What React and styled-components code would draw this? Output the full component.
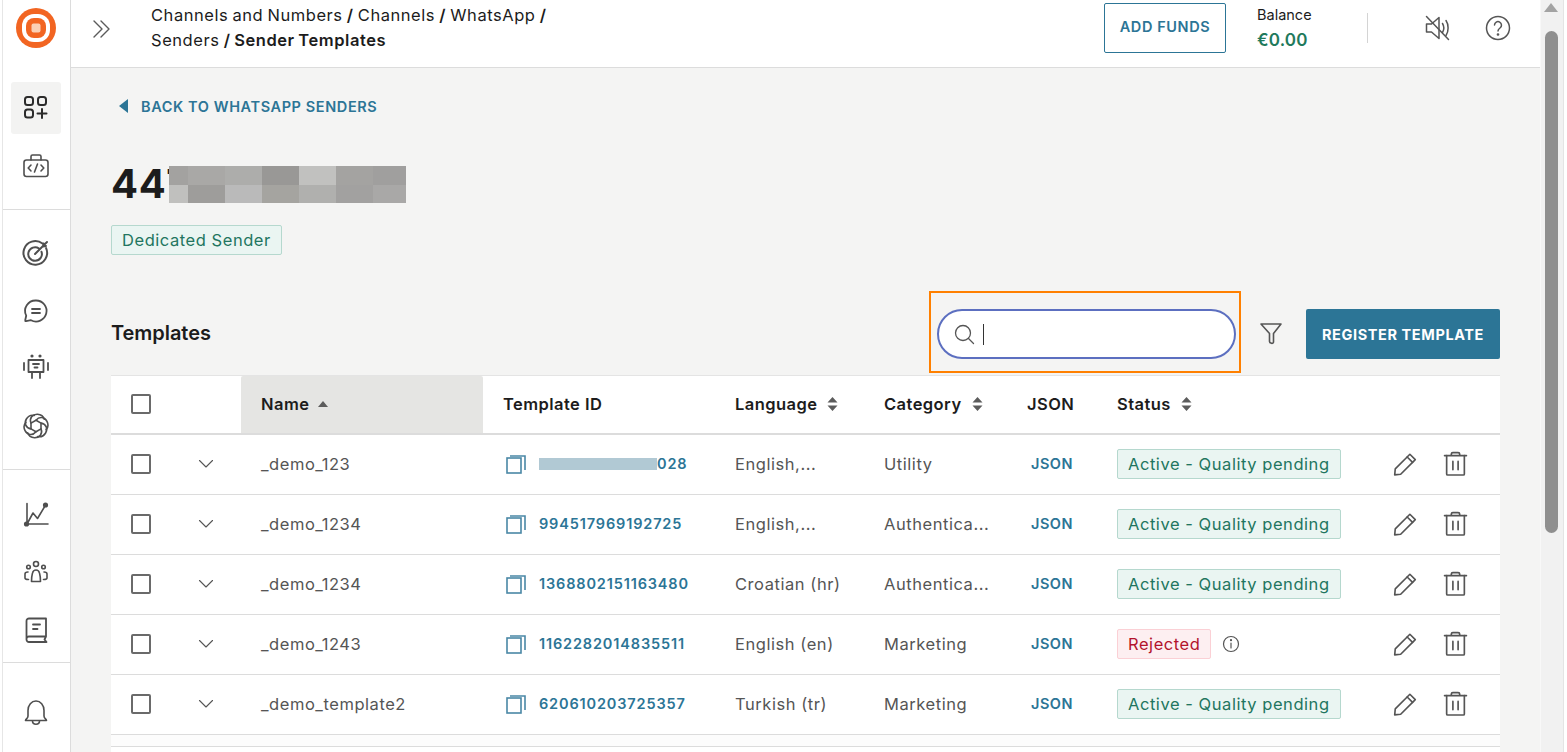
import React from "react";
import styled, { createGlobalStyle } from "styled-components";

const Global = createGlobalStyle`
  html, body { margin: 0; padding: 0; height: 100%; overflow: hidden; background: #fff; }
  body { font-family: Inter, "Liberation Sans", sans-serif; color: #1c1c1c; }
  #root { height: 100%; }
  * { box-sizing: border-box; }
`;

const Shell = styled.div`
  display: flex;
  width: 1567px;
  height: 752px;
  overflow: hidden;
  background: #fff;
`;

const Sidebar = styled.aside`
  width: 69px;
  flex: none;
  margin-left: 2px;
  border-left: 1px solid #e6e6e6;
  border-right: 1px solid #dcdcdc;
  display: flex;
  flex-direction: column;
  background: #fff;
`;

const SideGroup = styled.div`
  height: ${(p) => p.$h}px;
  flex: none;
  padding-top: ${(p) => p.$pt || 0}px;
  border-bottom: ${(p) => (p.$last ? "none" : "1px solid #dcdcdc")};
  display: flex;
  flex-direction: column;
  align-items: center;
  gap: ${(p) => p.$gap || 0}px;
`;

const LogoWrap = styled.div`
  height: 82px;
  width: 100%;
  flex: none;
  display: flex;
  align-items: flex-start;
  padding-top: 8px;
  justify-content: center;
  padding-right: 2px;
`;

const NavItem = styled.div`
  width: 50px;
  height: ${(p) => p.$h || 52}px;
  flex: none;
  margin-right: 2px;
  display: flex;
  align-items: center;
  justify-content: center;
  border-radius: 3px;
  background: ${(p) => (p.$active ? "#f3f3f2" : "transparent")};
  color: #4f4f4f;
`;

const Main = styled.div`
  flex: 1;
  min-width: 0;
  display: flex;
  flex-direction: column;
  background: #f4f4f3;
`;

const Header = styled.header`
  height: 68px;
  flex: none;
  background: #fff;
  border-bottom: 1px solid #dcdcdc;
  display: flex;
  align-items: flex-start;
  padding-left: 21px;
`;

const Expand = styled.div`
  width: 20px;
  height: 20px;
  margin-top: 19px;
  margin-right: 39px;
  color: #5b5b5b;
`;

const Crumbs = styled.div`
  width: 420px;
  margin-top: 3px;
  font-size: 16.5px;
  line-height: 25px;
  letter-spacing: 0.55px;
  word-spacing: -1px;
  color: #1c1c1c;
  b { font-weight: 600; }
`;

const HeaderRight = styled.div`
  margin-left: auto;
  display: flex;
  align-items: flex-start;
`;

const AddFunds = styled.button`
  width: 122px;
  height: 50px;
  margin-top: 3px;
  padding-bottom: 5px;
  background: #fff;
  border: 1px solid #2c7596;
  border-radius: 2px;
  color: #2c7596;
  font: 600 14.5px Inter, sans-serif;
  letter-spacing: 0.6px;
`;

const Balance = styled.div`
  margin-left: 31px;
  width: 110px;
  padding-top: 6px;
  font-size: 14.5px;
  line-height: 18px;
`;

const BalanceValue = styled.div`
  margin-top: 5px;
  font-size: 17px;
  line-height: 22px;
  font-weight: 600;
  color: #1f7a5c;
  letter-spacing: 0.2px;
`;

const HeaderDivider = styled.div`
  width: 1px;
  height: 30px;
  margin-top: 13px;
  background: #d4d4d4;
`;

const HeaderIcon = styled.div`
  width: 28px;
  height: 28px;
  margin-top: 14px;
  margin-left: ${(p) => p.$ml}px;
  margin-right: ${(p) => p.$mr || 0}px;
  color: #555;
`;

const Content = styled.main`
  flex: 1;
  min-height: 0;
  padding: 0 40px;
  display: flex;
  flex-direction: column;
`;

const Back = styled.div`
  display: flex;
  align-items: center;
  gap: 13px;
  margin-top: 29px;
  margin-left: 8px;
  height: 18px;
  font-size: 14.5px;
  font-weight: 600;
  letter-spacing: 0.6px;
  color: #2c7596;
`;

const Triangle = styled.span`
  width: 0;
  height: 0;
  border-top: 7px solid transparent;
  border-bottom: 7px solid transparent;
  border-right: 9px solid #2c7596;
`;

const Title = styled.h1`
  position: relative;
  margin: 46px 0 0;
  height: 48px;
  font-size: 40px;
  line-height: 46px;
  font-weight: 700;
  letter-spacing: 0.6px;
  color: #1c1c1c;
`;

const Mosaic = styled.div`
  position: absolute;
  left: 58px;
  top: 5px;
  width: 237px;
  height: 37px;
  display: grid;
  grid-template-columns: 19px repeat(5, 37px) 33px;
  grid-template-rows: 19px 18px;
`;

const Pixel = styled.i`
  display: block;
  background: ${(p) => p.$c};
`;

const TagRow = styled.div`
  margin-top: 16px;
  height: 30px;
  display: flex;
`;

const Tag = styled.span`
  display: inline-flex;
  align-items: center;
  height: 30px;
  padding: 0 10px;
  border-radius: 2px;
  font-size: 16.5px;
  letter-spacing: 0.55px;
  border: 1px solid ${(p) => (p.$red ? "#fbd0d5" : "#b5d8ce")};
  background: ${(p) => (p.$red ? "#fdeff1" : "#eaf5f2")};
  color: ${(p) => (p.$red ? "#b3132c" : "#227560")};
`;

const Toolbar = styled.div`
  margin-top: 36px;
  height: 82px;
  flex: none;
  display: flex;
  align-items: center;
`;

const SectionTitle = styled.h2`
  margin: 2px 0 0;
  font-size: 20px;
  font-weight: 600;
  color: #1c1c1c;
  letter-spacing: -0.05px;
`;

const Focus = styled.div`
  margin-left: auto;
  width: 312px;
  height: 82px;
  border: 2px solid #ff8000;
  padding: 16px 3px 0 6px;
`;

const SearchBox = styled.div`
  width: 299px;
  height: 50px;
  background: #fff;
  border: 2px solid #5c6fc0;
  border-radius: 25px;
  display: flex;
  align-items: center;
  padding-left: 14px;
  color: #555;
`;

const Caret = styled.span`
  width: 1px;
  height: 21px;
  margin-left: 8px;
  background: #333;
`;

const FilterBtn = styled.div`
  width: 24px;
  height: 24px;
  margin: 2px 23px 0 18px;
  color: #555;
`;

const Primary = styled.button`
  width: 194px;
  height: 50px;
  margin-top: 4px;
  border: none;
  border-radius: 2px;
  background: #2c7596;
  color: #fff;
  font: 700 14.5px Inter, sans-serif;
  letter-spacing: 0.6px;
`;

const Table = styled.div`
  margin-top: 2px;
  background: #fff;
  flex: 1;
`;

const COLS = "60px 70px 242px 232px 149px 143px 90px 263px 140px";

const HeadRow = styled.div`
  display: grid;
  grid-template-columns: ${COLS};
  height: 60px;
  border-top: 1px solid #e4e4e4;
  border-bottom: 2px solid #dcdcdc;
  font-size: 16.5px;
  font-weight: 600;
  letter-spacing: 0.45px;
  color: #1c1c1c;
`;

const Row = styled.div`
  display: grid;
  grid-template-columns: ${COLS};
  height: 60px;
  border-bottom: 1px solid #dcdcdc;
  font-size: 16.5px;
  letter-spacing: 0.55px;
  color: #555;
`;

const Cell = styled.div`
  display: flex;
  align-items: center;
  gap: ${(p) => p.$gap || 0}px;
  padding-left: ${(p) => p.$pl ?? 20}px;
  padding-bottom: 2px;
  min-width: 0;
  white-space: nowrap;
  background: ${(p) => (p.$sorted ? "#e5e5e3" : "transparent")};
  border-radius: ${(p) => (p.$sorted ? "2px 2px 0 0" : "0")};
`;

const Box = styled.span`
  width: 20px;
  height: 20px;
  border: 2px solid #6a6a6a;
  border-radius: 2px;
  background: #fff;
`;

const Mono = styled.span`
  color: #2c7596;
  font-size: 14.5px;
  font-weight: 600;
  letter-spacing: 0.85px;
  display: inline-flex;
  align-items: center;
`;

const JsonLink = styled.span`
  color: #2c7596;
  font-size: 14.5px;
  font-weight: 600;
  letter-spacing: 0.5px;
  margin-left: 4px;
`;

const Blur = styled.span`
  display: inline-block;
  width: 118px;
  height: 12px;
  background: #b1c9d4;
`;

const TableEnd = styled.div`
  height: 12px;
  background: #fcfcfc;
  border-bottom: 1px solid #dcdcdc;
`;

const ScrollTrack = styled.div`
  width: 24px;
  flex: none;
  background: #f1f1f1;
  border-right: 1px solid #e4e4e4;
  position: relative;
  margin-right: 3px;
  border-left: 1px solid #f8f8f8;
`;

const ScrollUp = styled.span`
  position: absolute;
  top: 3px;
  left: 3px;
  width: 0;
  height: 0;
  border-left: 7.5px solid transparent;
  border-right: 7.5px solid transparent;
  border-bottom: 9px solid #a3a3a3;
`;

const ScrollThumb = styled.span`
  position: absolute;
  top: 31px;
  left: 4px;
  width: 13px;
  height: 502px;
  border-radius: 7px;
  background: #8f8f8f;
`;

const S = ({ size = 28, vb = 28, sw = 1.6, children, fill = "none" }) => (
  <svg width={size} height={size} viewBox={`0 0 ${vb} ${vb}`} fill={fill} stroke="currentColor" strokeWidth={sw} strokeLinecap="round" strokeLinejoin="round" style={{ display: "block" }}>
    {children}
  </svg>
);

const Logo = () => (
  <svg width="40" height="40" viewBox="0 0 40 40" style={{ display: "block" }}>
    <circle cx="20" cy="20" r="20" fill="#f26522" />
    <rect x="6" y="6" width="28" height="28" rx="12" fill="#fff" />
    <rect x="10" y="10" width="20" height="20" rx="8" fill="#f26522" />
    <rect x="15.5" y="15.5" width="9" height="9" rx="2" fill="#fbd0b5" />
  </svg>
);

const IconApps = () => (
  <S>
    <g stroke="#2b2b2b" strokeWidth="2">
      <rect x="3" y="3" width="8" height="8" rx="2.5" />
      <rect x="16" y="3" width="8" height="8" rx="2.5" />
      <rect x="3" y="15.5" width="8" height="8" rx="2.5" />
      <path d="M20 15v9M15.5 19.5h9" />
    </g>
  </S>
);
const IconDev = () => (
  <S>
    <rect x="2" y="7" width="24" height="16.500" rx="2.500" />
    <path d="M9 7V3.500c0-1 .5-1.500 1.500-1.500h7c1 0 1.500.5 1.500 1.500V7" />
    <path d="M9 12l-2.800 3 2.800 3M19 12l2.800 3-2.800 3M15.500 11l-3 8" />
  </S>
);
const IconTarget = () => (
  <S>
    <path d="M20.500 4.500a11.800 11.800 0 1 0 3.600 4.600" strokeWidth="2" />
    <path d="M17 9.500a6.800 6.800 0 1 0 2.500 3.300" strokeWidth="2" />
    <path d="M13 15L25 3M21.500 4.500l-.5 3 3-.5" strokeWidth="2" />
  </S>
);
const IconChat = () => (
  <S>
    <path d="M14 3.500a10.500 10.500 0 1 1-5 19.700l-5 1c-.7.1-1-.4-.8-1l1-4.500A10.500 10.500 0 0 1 14 3.500z" strokeWidth="1.8" />
    <path d="M10 12h8M10 16h8" strokeWidth="1.8" />
  </S>
);
const IconBot = () => (
  <S>
    <rect x="6.500" y="6" width="15" height="12" strokeWidth="1.8" />
    <path d="M11 10h6M12.500 13.500h3M10 18v6M18 18v6M2 9v7M26 9v7" strokeWidth="1.8" />
    <circle cx="10" cy="2" r=".8" fill="currentColor" />
    <circle cx="18" cy="2" r=".8" fill="currentColor" />
  </S>
);
const IconSwirl = () => (
  <S sw={1.6}>
    <path d="M14 8.200L19 11.100V16.900L14 19.800L9 16.900V11.100z" />
    {[0, 60, 120, 180, 240, 300].map((a) => (
      <path key={a} transform={`rotate(${a} 14 14)`} d="M9 11.100C7 6 10.500 2 15.500 2.200C19 2.400 21.500 4.500 22.300 7.200" />
    ))}
  </S>
);
const IconChart = () => (
  <S>
    <path d="M5 3.500v20.500h21M5 24L11 13l4.500 5.500L23 6" strokeWidth="1.6" />
    <circle cx="4.500" cy="24" r="1.800" fill="currentColor" />
    <circle cx="23.500" cy="5" r="1.800" fill="currentColor" />
  </S>
);
const IconTeam = () => (
  <S>
    <circle cx="14" cy="6" r="2.500" />
    <path d="M9.500 23.500c0-3 .3-6 1-8.500.5-2 2-3 3.500-3s3 1 3.500 3c.7 2.500 1 5.500 1 8.500z" />
    <circle cx="6.500" cy="9" r="1.800" />
    <circle cx="21.500" cy="9" r="1.800" />
    <path d="M6 14c-1.500 0-3 .5-3 2v4c0 1 .7 1.500 3.500 1.500M22 14c1.500 0 3 .5 3 2v4c0 1-.7 1.500-3.500 1.500" />
  </S>
);
const IconBook = () => (
  <S>
    <path d="M24 2.500H7a2.500 2.500 0 0 0-2.500 2.500v18.500A2.500 2.500 0 0 0 7 26h17.500l-2-2.500 1.500-3V2.500zM4.500 22.500A2.500 2.500 0 0 1 7 20.500h17" strokeWidth="1.8" />
    <path d="M11 8.500h7M11 13h4.500" strokeWidth="1.8" />
  </S>
);
const IconBell = () => (
  <S>
    <path d="M3.500 22.500h21c-.2-1.500-2.500-2-2.500-4.500v-5.500C22 7 18.500 3 14 3S6 7 6 12.500V18c0 2.500-2.300 3-2.500 4.500z" strokeWidth="1.6" />
    <path d="M10.500 23c0 2 1.500 3.200 3.500 3.200s3.500-1.200 3.500-3.200" strokeWidth="1.6" />
  </S>
);
const IconDouble = () => (
  <S size={20} vb={20} sw={1.4}>
    <path d="M2 2l8 8-8 8M9 2l8 8-8 8" />
  </S>
);
const IconMute = () => (
  <S sw={1.5}>
    <path d="M2.500 10v8h5l7.500 6.500V3.500L7.500 10z" />
    <path d="M18.500 9.500c1.500 2.500 1.500 6.500 0 9M22 6.500c2.800 4 2.800 11 0 15" />
    <path d="M2.500 2.500l22 23" />
  </S>
);
const IconHelp = () => (
  <S sw={1.5}>
    <circle cx="14" cy="14" r="11.500" />
    <path d="M10.500 11a3.500 3.500 0 1 1 5.500 3c-1.300.9-2 1.500-2 3" />
    <circle cx="14" cy="20.500" r=".6" fill="currentColor" />
  </S>
);
const IconSearch = () => (
  <S size={22} vb={22} sw={1.3}>
    <circle cx="10" cy="10" r="7.500" />
    <path d="M15.500 15.500l5 5" />
  </S>
);
const IconFilter = () => (
  <S size={24} vb={24} sw={1.6}>
    <path d="M2 3h20l-7.500 9.500V21c0 1-1 1.500-2 1.300-1-.2-2-.8-2-1.800v-8z" />
  </S>
);
const IconChevron = () => (
  <S size={16} vb={16} sw={1.1}>
    <path d="M1.500 4.500L8 11l6.500-6.500" />
  </S>
);
const IconCopy = () => (
  <svg width="20" height="20" viewBox="0 0 20 20" fill="none" stroke="#4a88a6" strokeWidth="1.6" style={{ display: "block" }}>
    <rect x="1" y="4" width="14" height="15" />
    <path d="M4 2h15v14" />
  </svg>
);
const IconPencil = () => (
  <S size={26} vb={24} sw={1.5}>
    <path d="M2.500 22l.5-5.500L16.500 3l5 5L8 21.500z" />
    <path d="M14 5.500l5 5" />
  </S>
);
const IconTrash = () => (
  <S size={25} vb={24} sw={1.6}>
    <path d="M1.500 4.500h21M8 4.500V2.800C8 2 8.500 1.500 9.500 1.500h5c1 0 1.500.5 1.500 1.300v1.700" />
    <path d="M3.500 4.500V22c0 .5.5 1 1 1h15c.5 0 1-.5 1-1V4.500" />
    <path d="M9.500 10v8M14.500 10v8" />
  </S>
);
const IconInfo = () => (
  <S size={18} vb={18} sw={1.2}>
    <circle cx="9" cy="9" r="7.500" />
    <path d="M9 8v5" />
    <circle cx="9" cy="5.200" r=".5" fill="currentColor" />
  </S>
);

const SortBoth = () => (
  <svg width="11" height="14" viewBox="0 0 10 14" fill="#5c5c5c" style={{ display: "block" }}>
    <path d="M5 0l5 5.500H0zM5 14L0 8.500h10z" />
  </svg>
);
const SortUp = () => (
  <svg width="10" height="6" viewBox="0 0 10 6" fill="#5c5c5c" style={{ display: "block" }}>
    <path d="M5 0l5 6H0z" />
  </svg>
);

const PIXELS = ["#a3a2a0", "#a9a8a6", "#adadab", "#999896", "#c1c1bf", "#a4a3a1", "#a09f9e", "#c0c0be", "#9e9d9b", "#bababa", "#a5a4a0", "#b0b0ae", "#a2a1a0", "#a9a8a7"];

const rows = [
  { name: "_demo_123", id: "028", hidden: true, lang: "English,...", cat: "Utility", status: "active" },
  { name: "_demo_1234", id: "994517969192725", lang: "English,...", cat: "Authentica...", status: "active" },
  { name: "_demo_1234", id: "1368802151163480", lang: "Croatian (hr)", cat: "Authentica...", status: "active" },
  { name: "_demo_1243", id: "1162282014835511", lang: "English (en)", cat: "Marketing", status: "rejected" },
  { name: "_demo_template2", id: "620610203725357", lang: "Turkish (tr)", cat: "Marketing", status: "active" },
];

export default function App() {
  return (
    <Shell>
      <Global />
      <Sidebar>
        <SideGroup $h={210}>
          <LogoWrap><Logo /></LogoWrap>
          <NavItem $active><IconApps /></NavItem>
          <NavItem $h={66}><IconDev /></NavItem>
        </SideGroup>
        <SideGroup $h={260} $pt={29} $gap={29.5}>
          <NavItem $h={28}><IconTarget /></NavItem>
          <NavItem $h={28}><IconChat /></NavItem>
          <NavItem $h={28}><IconBot /></NavItem>
          <NavItem $h={28}><IconSwirl /></NavItem>
        </SideGroup>
        <SideGroup $h={193} $pt={30} $gap={30}>
          <NavItem $h={28}><IconChart /></NavItem>
          <NavItem $h={28}><IconTeam /></NavItem>
          <NavItem $h={28}><IconBook /></NavItem>
        </SideGroup>
        <SideGroup $h={89} $pt={35} $last>
          <NavItem $h={28}><IconBell /></NavItem>
        </SideGroup>
      </Sidebar>
      <Main>
        <Header>
          <Expand><IconDouble /></Expand>
          <Crumbs>
            Channels and Numbers <b>/</b> Channels <b>/</b> WhatsApp <b>/</b> Senders <b>/ Sender Templates</b>
          </Crumbs>
          <HeaderRight>
            <AddFunds>ADD FUNDS</AddFunds>
            <Balance>
              Balance
              <BalanceValue>€0.00</BalanceValue>
            </Balance>
            <HeaderDivider />
            <HeaderIcon $ml={56}><IconMute /></HeaderIcon>
            <HeaderIcon $ml={32} $mr={28}><IconHelp /></HeaderIcon>
          </HeaderRight>
        </Header>
        <Content>
          <Back><Triangle />BACK TO WHATSAPP SENDERS</Back>
          <Title>
            447
            <Mosaic>
              {PIXELS.map((c, i) => <Pixel key={i} $c={c} />)}
            </Mosaic>
          </Title>
          <TagRow><Tag>Dedicated Sender</Tag></TagRow>
          <Toolbar>
            <SectionTitle>Templates</SectionTitle>
            <Focus>
              <SearchBox>
                <IconSearch />
                <Caret />
              </SearchBox>
            </Focus>
            <FilterBtn><IconFilter /></FilterBtn>
            <Primary>REGISTER TEMPLATE</Primary>
          </Toolbar>
          <Table>
            <HeadRow>
              <Cell><Box /></Cell>
              <Cell />
              <Cell $sorted $gap={9}>Name <SortUp /></Cell>
              <Cell>Template ID</Cell>
              <Cell $gap={10}>Language <SortBoth /></Cell>
              <Cell $gap={10}>Category <SortBoth /></Cell>
              <Cell>JSON</Cell>
              <Cell $gap={10}>Status <SortBoth /></Cell>
              <Cell />
            </HeadRow>
            {rows.map((r, i) => (
              <Row key={i}>
                <Cell><Box /></Cell>
                <Cell $pl={27}><IconChevron /></Cell>
                <Cell>{r.name}</Cell>
                <Cell $gap={13} $pl={23}>
                  <IconCopy />
                  <Mono>{r.hidden && <Blur />}{r.id}</Mono>
                </Cell>
                <Cell>{r.lang}</Cell>
                <Cell>{r.cat}</Cell>
                <Cell><JsonLink>JSON</JsonLink></Cell>
                <Cell $gap={11}>
                  {r.status === "active" ? (
                    <Tag>Active - Quality pending</Tag>
                  ) : (
                    <>
                      <Tag $red>Rejected</Tag>
                      <IconInfo />
                    </>
                  )}
                </Cell>
                <Cell $pl={32} $gap={25}>
                  <IconPencil />
                  <IconTrash />
                </Cell>
              </Row>
            ))}
            <TableEnd />
          </Table>
        </Content>
      </Main>
      <ScrollTrack>
        <ScrollUp />
        <ScrollThumb />
      </ScrollTrack>
    </Shell>
  );
}
